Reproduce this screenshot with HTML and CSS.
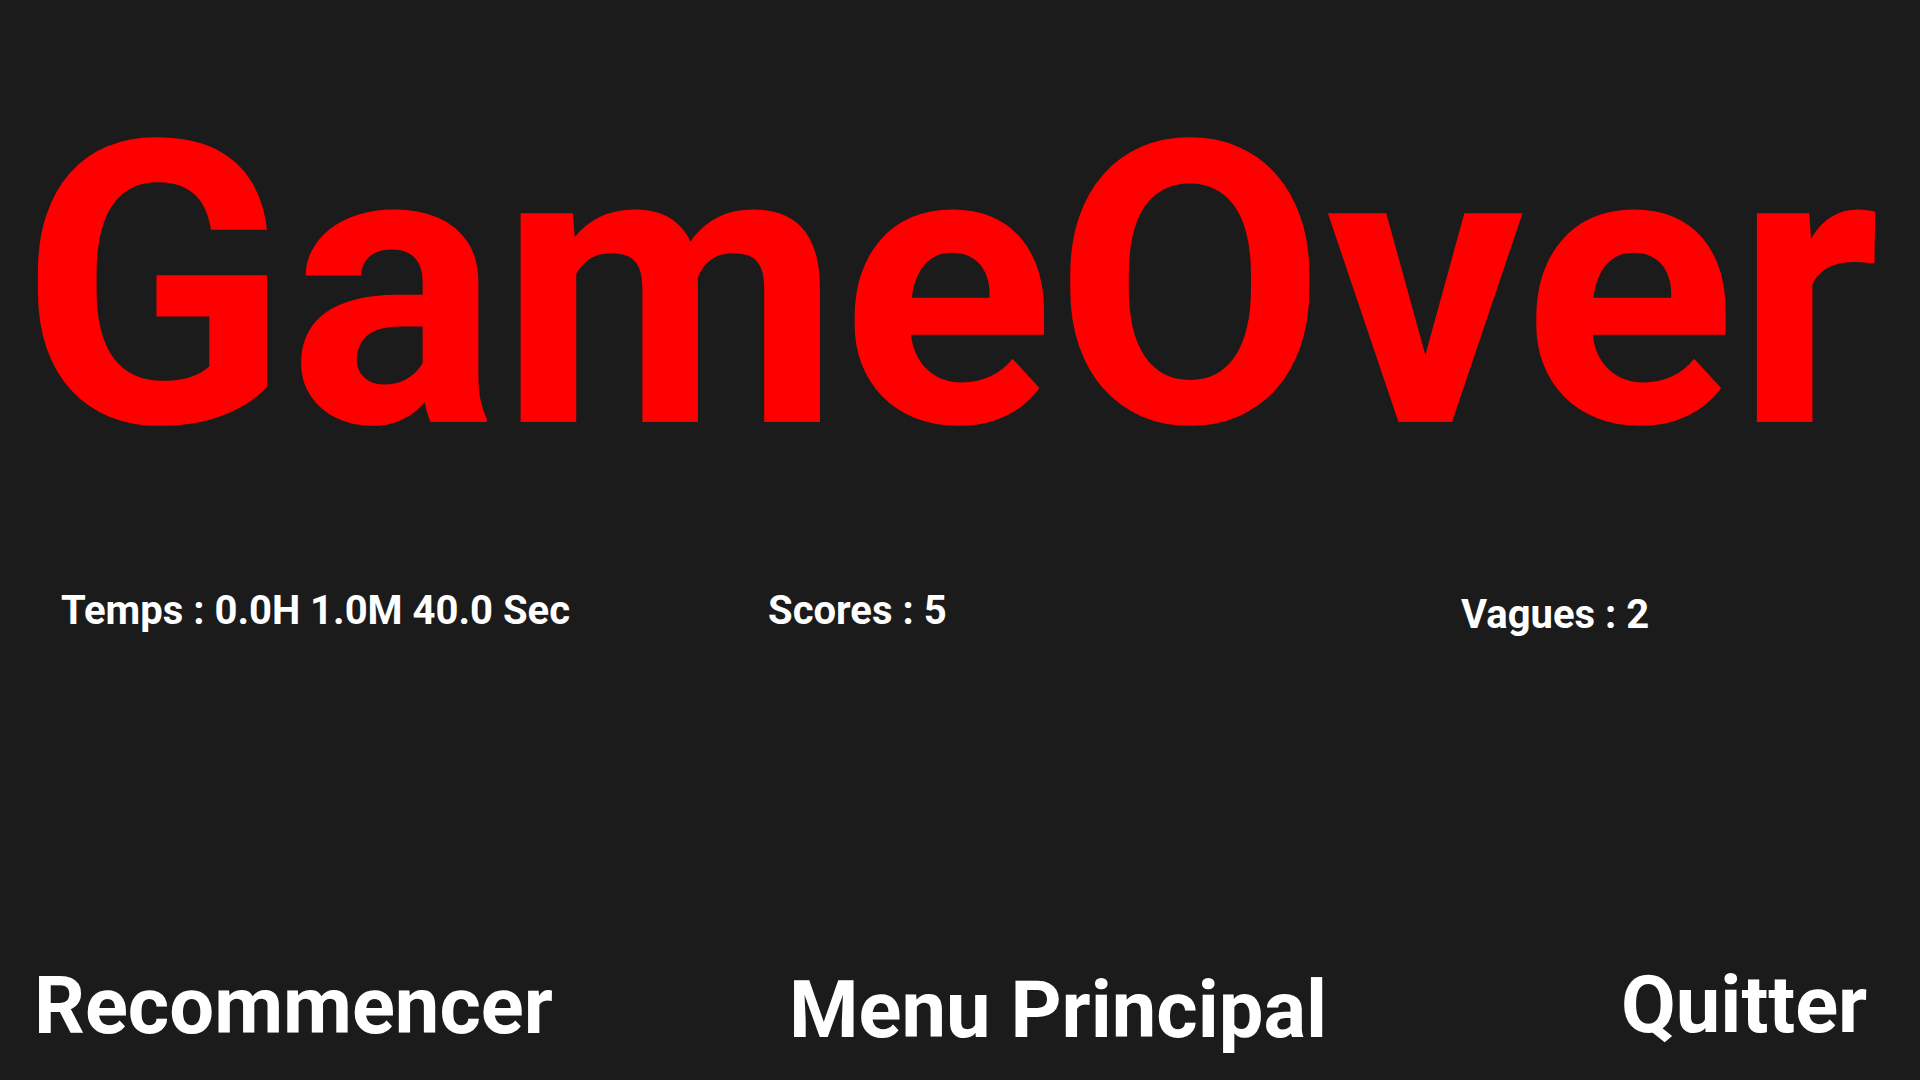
FILE: index.html
```html
<!DOCTYPE html>
<html lang="fr">
<head>
<meta charset="utf-8">
<title>Game Over</title>
<link rel="stylesheet" href="styles.css">
</head>
<body>
<main class="screen">
  <h1 class="title">GameOver</h1>
  <section class="stats">
    <div class="stat stat-time">Temps : 0.0H 1.0M 40.0 Sec</div>
    <div class="stat stat-score">Scores : 5</div>
    <div class="stat stat-waves">Vagues : 2</div>
  </section>
  <nav class="actions">
    <div class="action action-restart">Recommencer</div>
    <div class="action action-menu">Menu Principal</div>
    <div class="action action-quit">Quitter</div>
  </nav>
</main>
</body>
</html>
```
FILE: styles.css
```css
html, body {
  margin: 0;
  padding: 0;
  background: #1b1b1b;
}
.screen {
  width: 1920px;
  height: 1080px;
  display: flex;
  flex-direction: column;
  font-family: Roboto, "Liberation Sans", sans-serif;
  font-weight: 700;
  color: #ffffff;
  overflow: hidden;
}
.title {
  margin: 87px 0 0 0;
  padding-right: 21px;
  height: 400px;
  font-size: 395px;
  line-height: 400px;
  font-weight: 700;
  letter-spacing: -0.5px;
  color: #ff0000;
  text-align: center;
  white-space: nowrap;
}
.stats {
  margin-top: 102px;
  padding-left: 61px;
  display: grid;
  grid-template-columns: 707px 693px 1fr;
  height: 44px;
}
.stat {
  font-size: 40px;
  line-height: 44px;
  white-space: nowrap;
}
.stat-waves {
  margin-top: 4px;
}
.actions {
  margin-top: 322px;
  padding-left: 34px;
  display: grid;
  grid-template-columns: 755px 832px 1fr;
}
.action {
  font-size: 79.5px;
  line-height: 100px;
  white-space: nowrap;
}
.action-restart {
  margin-top: 1px;
}
.action-menu {
  margin-top: 5px;
}
```
